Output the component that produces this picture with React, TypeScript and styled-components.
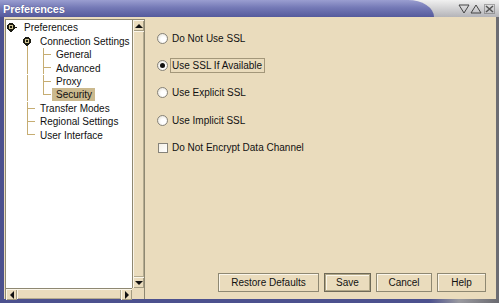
import styled, { createGlobalStyle } from "styled-components"

const GlobalStyle = createGlobalStyle`
    html, body {
        margin: 0;
        padding: 0;
        background: #ffffff;
    }
    body {
        font-family: "Liberation Sans", Arial, sans-serif;
    }
`

const BEIGE = "#eadcbd"
const EDGE = "#8e8872"
const GUIDE = "#c6ad72"

type Cell = "empty" | "pipe" | "tee" | "elbow" | "root" | "branch"

const treeRows: { label: string; cells: Cell[]; selected?: boolean }[] = [
    { label: "Preferences", cells: ["root"] },
    { label: "Connection Settings", cells: ["empty", "branch"] },
    { label: "General", cells: ["empty", "pipe", "tee"] },
    { label: "Advanced", cells: ["empty", "pipe", "tee"] },
    { label: "Proxy", cells: ["empty", "pipe", "tee"] },
    { label: "Security", cells: ["empty", "pipe", "elbow"], selected: true },
    { label: "Transfer Modes", cells: ["empty", "tee"] },
    { label: "Regional Settings", cells: ["empty", "tee"] },
    { label: "User Interface", cells: ["empty", "elbow"] },
]

const options = [
    { label: "Do Not Use SSL", checked: false },
    { label: "Use SSL If Available", checked: true, focused: true },
    { label: "Use Explicit SSL", checked: false },
    { label: "Use Implicit SSL", checked: false },
]

const buttons = [
    { label: "Restore Defaults", width: 101 },
    { label: "Save", width: 47, focused: true },
    { label: "Cancel", width: 56 },
    { label: "Help", width: 49 },
]

function Handle() {
    return (
        <>
            <circle cx="8" cy="6" r="3.2" fill="#cfc290" stroke="#1c1c14" strokeWidth="1.3" />
            <circle cx="8" cy="6" r="1.3" fill="#1c1c14" />
            <line x1="8" y1="9.5" x2="8" y2="11.5" stroke="#1c1c14" strokeWidth="1.2" />
        </>
    )
}

function Guide({ kind }: { kind: Cell }) {
    return (
        <GuideSvg width="16" height="13.4" viewBox="0 0 16 13.4" shapeRendering="crispEdges">
            {(kind === "pipe" || kind === "tee") && (
                <line x1="8.5" y1="0" x2="8.5" y2="13.4" stroke={GUIDE} />
            )}
            {kind === "elbow" && <line x1="8.5" y1="0" x2="8.5" y2="7" stroke={GUIDE} />}
            {(kind === "tee" || kind === "elbow") && (
                <line x1="8.5" y1="6.5" x2="16" y2="6.5" stroke={GUIDE} />
            )}
            {kind === "branch" && <line x1="8.5" y1="6" x2="8.5" y2="13.4" stroke={GUIDE} />}
            {kind === "root" && <line x1="10" y1="6.5" x2="14" y2="6.5" stroke="#1c1c14" />}
            {(kind === "root" || kind === "branch") && <Handle />}
        </GuideSvg>
    )
}

function Arrow({ dir }: { dir: "up" | "down" | "left" | "right" }) {
    const points = {
        up: "1,5 5,1 9,5",
        down: "1,1 5,5 9,1",
        left: "5,1 1,5 5,9",
        right: "1,1 5,5 1,9",
    }[dir]
    const vertical = dir === "up" || dir === "down"
    return (
        <svg width={vertical ? 10 : 6} height={vertical ? 6 : 10} viewBox={vertical ? "0 0 10 6" : "0 0 6 10"}>
            <polygon points={points} fill="#111" />
        </svg>
    )
}

function WindowControls() {
    return (
        <svg width="38" height="12" viewBox="0 0 38 12">
            <polygon points="1,2 11,2 6,10" fill="none" stroke="#444" strokeWidth="1" />
            <polygon points="13,10 23,10 18,2" fill="none" stroke="#444" strokeWidth="1" />
            <rect x="26.5" y="1.5" width="10" height="9" fill="none" stroke="#666" strokeDasharray="1 1" />
            <path d="M28 3 L35 9 M35 3 L28 9" stroke="#555" strokeWidth="1.6" />
        </svg>
    )
}

function App() {
    return (
        <>
            <GlobalStyle />
            <Frame>
                <TitleBar>
                    <TitleTab>Preferences</TitleTab>
                    <Controls>
                        <WindowControls />
                    </Controls>
                </TitleBar>
                <Body>
                    <TreePane>
                        <TreeView>
                            {treeRows.map((row) => (
                                <TreeRow key={row.label}>
                                    {row.cells.map((cell, i) => (
                                        <Guide key={i} kind={cell} />
                                    ))}
                                    <NodeLabel $selected={row.selected}>{row.label}</NodeLabel>
                                </TreeRow>
                            ))}
                        </TreeView>
                        <VScroll>
                            <ArrowButton>
                                <Arrow dir="up" />
                            </ArrowButton>
                            <Track />
                            <ArrowButton>
                                <Arrow dir="down" />
                            </ArrowButton>
                        </VScroll>
                        <HScroll>
                            <ArrowButton>
                                <Arrow dir="left" />
                            </ArrowButton>
                            <Track />
                            <ArrowButton>
                                <Arrow dir="right" />
                            </ArrowButton>
                        </HScroll>
                        <Corner />
                    </TreePane>
                    <Settings>
                        <Options>
                            {options.map((opt) => (
                                <OptionRow key={opt.label}>
                                    <Radio $checked={opt.checked} />
                                    <OptionLabel $focused={opt.focused}>{opt.label}</OptionLabel>
                                </OptionRow>
                            ))}
                            <OptionRow>
                                <Checkbox />
                                <OptionLabel>Do Not Encrypt Data Channel</OptionLabel>
                            </OptionRow>
                        </Options>
                        <ButtonBar>
                            {buttons.map((b) => (
                                <Button key={b.label} $width={b.width} $focused={b.focused}>
                                    {b.label}
                                </Button>
                            ))}
                        </ButtonBar>
                    </Settings>
                </Body>
            </Frame>
        </>
    )
}

export default App

const Frame = styled.div`
    width: 499px;
    height: 303px;
    display: flex;
    flex-direction: column;
    background: linear-gradient(to right, #4c518e 0%, #4c518e 86%, #9a9aa0 92%, #6a6a70 100%);
    overflow: hidden;
`

const TitleBar = styled.div`
    height: 17px;
    display: flex;
    background: linear-gradient(#f0f0f0, #b4b4b8);
`

const TitleTab = styled.div`
    flex: 1;
    display: flex;
    align-items: center;
    padding-left: 3px;
    background: linear-gradient(#9a9ed0, #7479b6 45%, #555a9c);
    border-top-right-radius: 26px 17px;
    color: #ffffff;
    font-size: 11px;
    font-weight: 700;
    letter-spacing: -0.1px;
    text-shadow: 0 0 1px #3a3f7a;
`

const Controls = styled.div`
    width: 62px;
    display: flex;
    align-items: center;
    justify-content: flex-end;
    padding-right: 3px;
`

const Body = styled.div`
    flex: 1;
    display: flex;
    margin: 0 3px 4px 4px;
    padding: 2px 0 0 1px;
    background: ${BEIGE};
`

const TreePane = styled.div`
    width: 138px;
    display: grid;
    grid-template-columns: 1fr 12px;
    grid-template-rows: 1fr 11px;
    border: 1px solid ${EDGE};
    border-bottom: none;
    background: ${BEIGE};
`

const TreeView = styled.div`
    background: #ffffff;
    overflow: hidden;
    padding-top: 1.3px;
`

const TreeRow = styled.div`
    height: 13.4px;
    display: flex;
    align-items: center;
    margin-left: -3px;
`

const GuideSvg = styled.svg`
    flex: none;
    display: block;
`

const NodeLabel = styled.span<{ $selected?: boolean }>`
    margin-left: 1px;
    padding: 0 3px 0 4px;
    height: 13px;
    line-height: 13px;
    font-size: 10px;
    color: #111;
    white-space: nowrap;
    background: ${(p) => (p.$selected ? "#cbb98e" : "transparent")};
`

const VScroll = styled.div`
    display: flex;
    flex-direction: column;
    border-left: 1px solid ${EDGE};
`

const HScroll = styled.div`
    display: flex;
    border-top: 1px solid ${EDGE};
`

const ArrowButton = styled.div`
    flex: none;
    width: 11px;
    height: 11px;
    display: flex;
    align-items: center;
    justify-content: center;
    background: ${BEIGE};
    box-shadow: inset 1px 1px #fbf6ea, inset -1px -1px #a49c82;
`

const Track = styled.div`
    flex: 1;
    background: ${BEIGE};
    box-shadow: inset 1px 1px #fbf6ea, inset -1px -1px #b4ab90;
`

const Corner = styled.div`
    background: ${BEIGE};
`

const Settings = styled.div`
    flex: 1;
    display: flex;
    flex-direction: column;
    padding: 12px 10px 7px 12px;
`

const Options = styled.div`
    display: flex;
    flex-direction: column;
    gap: 13.4px;
`

const OptionRow = styled.div`
    height: 14px;
    display: flex;
    align-items: center;
`

const Radio = styled.span<{ $checked?: boolean }>`
    flex: none;
    width: 11px;
    height: 11px;
    box-sizing: border-box;
    border-radius: 50%;
    border: 1px solid #86837a;
    background: radial-gradient(circle at 60% 60%, #ffffff 30%, #e0dccf 100%);
    display: flex;
    align-items: center;
    justify-content: center;
    &::after {
        content: "";
        width: 5px;
        height: 5px;
        border-radius: 50%;
        background: ${(p) => (p.$checked ? "#111" : "transparent")};
    }
`

const Checkbox = styled.span`
    flex: none;
    width: 10px;
    height: 10px;
    margin-left: 1px;
    box-sizing: border-box;
    border: 1px solid #86837a;
    background: linear-gradient(135deg, #f4f0e6, #ffffff);
`

const OptionLabel = styled.span<{ $focused?: boolean }>`
    margin-left: 2px;
    padding: 0 2px 0 1px;
    height: 13px;
    line-height: 13px;
    font-size: 10px;
    color: #111;
    white-space: nowrap;
    border: 1px solid ${(p) => (p.$focused ? "#a3977a" : "transparent")};
`

const ButtonBar = styled.div`
    margin-top: auto;
    display: flex;
    justify-content: flex-end;
    gap: 5px;
`

const Button = styled.button<{ $width: number; $focused?: boolean }>`
    width: ${(p) => p.$width}px;
    height: 19px;
    padding: 0;
    font-family: "Liberation Sans", Arial, sans-serif;
    font-size: 10px;
    color: #111;
    background: ${BEIGE};
    border: 1px solid ${(p) => (p.$focused ? "#6f6a58" : EDGE)};
    box-shadow: ${(p) =>
        p.$focused ? "inset 0 0 0 1px #b2a888, inset 1px 1px 0 1px #fbf6ea" : "inset 1px 1px #fbf6ea"};
`
